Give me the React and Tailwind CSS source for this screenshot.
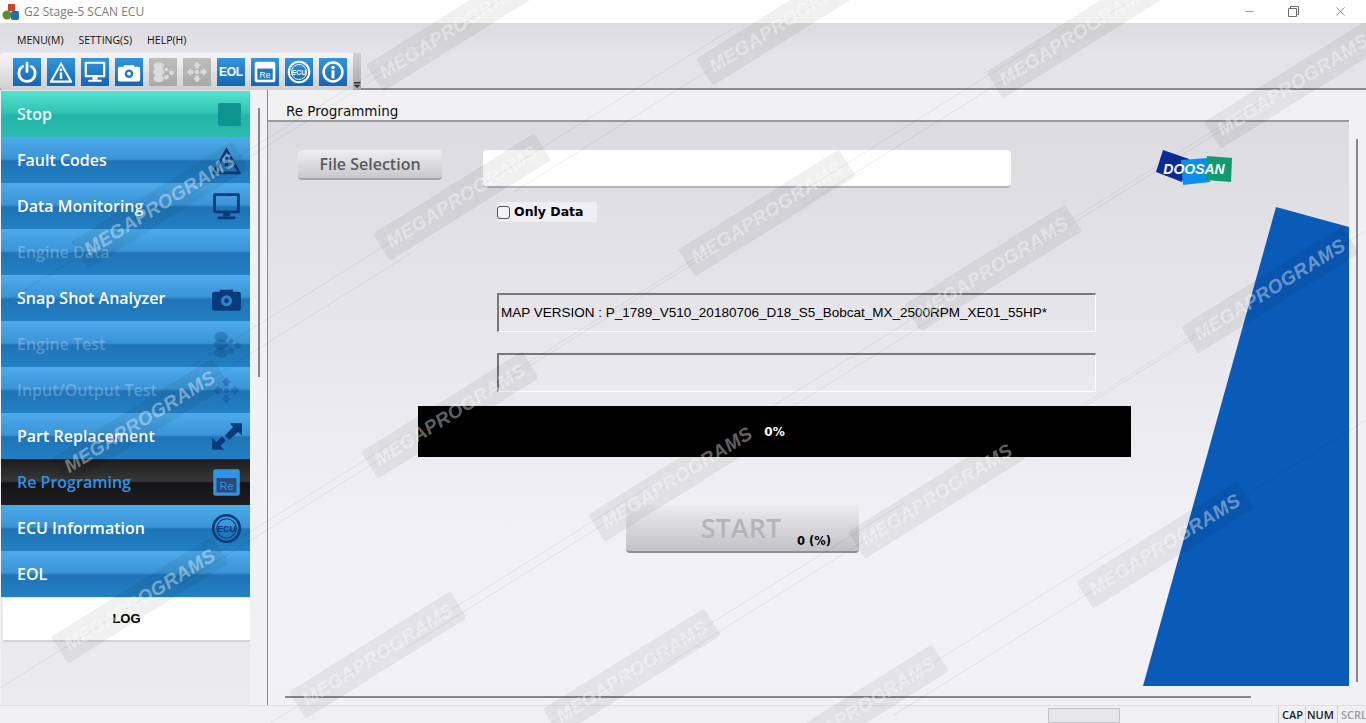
import React from 'react';
import { Minus, X } from 'lucide-react';

const SANS = "font-['Open_Sans','Noto_Sans',sans-serif]";

// one drawing per function, all on a 28 box, cut colour is whatever sits behind
const Glyph = ({ name, cut = '#1f78c4', className = 'w-7 h-7' }) => {
  const common = { viewBox: '0 0 28 28', className, fill: 'currentColor' };
  switch (name) {
    case 'power':
      return (
        <svg {...common} fill="none" stroke="currentColor" strokeWidth="3.2" strokeLinecap="round">
          <path d="M9 7.5a9.5 9.5 0 1 0 10 0" />
          <path d="M14 3.5v10" />
        </svg>
      );
    case 'alert':
      return (
        <svg {...common}>
          <path fillRule="evenodd" d="M14 2 27 25a1 1 0 0 1-1 1.5H2A1 1 0 0 1 1 25ZM14 6.5 4.5 24h19Z" />
          <circle cx="14" cy="11.5" r="1.7" />
          <rect x="12.6" y="14.5" width="2.8" height="7.5" />
        </svg>
      );
    case 'monitor':
      return (
        <svg {...common}>
          <path fillRule="evenodd" d="M3 2h22a1 1 0 0 1 1 1v16a1 1 0 0 1-1 1H3a1 1 0 0 1-1-1V3a1 1 0 0 1 1-1Zm1.5 2.5v13h19v-13Z" />
          <rect x="11" y="20" width="6" height="3" />
          <rect x="6" y="23" width="16" height="2.5" rx="1" />
        </svg>
      );
    case 'camera':
      return (
        <svg {...common}>
          <path d="M8 6h12v2h5a2 2 0 0 1 2 2v13a2 2 0 0 1-2 2H3a2 2 0 0 1-2-2V10a2 2 0 0 1 2-2h5Z" />
          <circle cx="14" cy="16" r="5" fill={cut} />
          <circle cx="14" cy="16" r="2.2" />
        </svg>
      );
    case 'engine':
      return (
        <svg {...common}>
          <ellipse cx="9" cy="7" rx="6" ry="4.5" />
          <ellipse cx="9" cy="14" rx="6.5" ry="4.5" />
          <ellipse cx="9" cy="21.5" rx="6" ry="4.5" />
          <circle cx="18" cy="11" r="2" />
          <circle cx="24" cy="15" r="2.8" />
          <circle cx="18" cy="20" r="2.8" />
        </svg>
      );
    case 'move':
      return (
        <svg {...common}>
          <circle cx="14" cy="14" r="2.5" />
          <path d="M14 2l4.5 5H16v3h-4V7H9.500ZM14 26l4.500-5H16v-3h-4v3H9.500ZM2 14l5-4.500V12h3v4H7v2.500ZM26 14l-5-4.500V12h-3v4h3v2.500Z" />
        </svg>
      );
    case 'swap':
      return (
        <svg {...common}>
          <path d="M17 2h11v11l-3.500-3-8 7-4-4 7.500-7.500Z" />
          <path d="M1 15v11h11l-3.500-3.500 5-5-3.500-3.500-5 5Z" />
        </svg>
      );
    case 're':
      return (
        <svg {...common}>
          <rect x="2" y="2" width="24" height="24" rx="2" />
          <rect x="5" y="10" width="18" height="13" fill={cut} />
          <text x="14" y="20.500" textAnchor="middle" fontSize="10" fontFamily="'Liberation Sans',sans-serif" fill="currentColor">Re</text>
        </svg>
      );
    case 'ecu':
      return (
        <svg {...common} fill="none">
          <circle cx="14" cy="14" r="12" stroke="currentColor" strokeWidth="2.400" />
          <circle cx="14" cy="14" r="8.800" stroke="currentColor" strokeWidth="1" />
          <text x="14" y="17" textAnchor="middle" fontSize="8" fontWeight="700" fontFamily="'Liberation Sans',sans-serif" fill="currentColor">ECU</text>
        </svg>
      );
    case 'info':
      return (
        <svg {...common}>
          <path fillRule="evenodd" d="M14 1.500a12.500 12.500 0 1 1 0 25 12.500 12.500 0 0 1 0-25Zm0 3a9.500 9.500 0 1 0 0 19 9.500 9.500 0 0 0 0-19Z" />
          <circle cx="14" cy="8.800" r="2" />
          <rect x="12.300" y="12" width="3.400" height="9.500" />
        </svg>
      );
    default:
      return null;
  }
};

const toolbarItems = [
  { name: 'power' },
  { name: 'alert' },
  { name: 'monitor' },
  { name: 'camera' },
  { name: 'engine', off: true },
  { name: 'move', off: true },
  { name: 'eol' },
  { name: 're' },
  { name: 'ecu' },
  { name: 'info' },
];

const sideItems = [
  { label: 'Stop', kind: 'stop' },
  { label: 'Fault Codes', icon: 'alert' },
  { label: 'Data Monitoring', icon: 'monitor' },
  { label: 'Engine Data', off: true },
  { label: 'Snap Shot Analyzer', icon: 'camera' },
  { label: 'Engine Test', icon: 'engine', off: true },
  { label: 'Input/Output Test', icon: 'move', off: true },
  { label: 'Part Replacement', icon: 'swap' },
  { label: 'Re Programing', icon: 're', kind: 'active' },
  { label: 'ECU Information', icon: 'ecu' },
  { label: 'EOL' },
];

const watermarks = [
  'left-[455px] top-[28px]',
  'left-[785px] top-[22px]',
  'left-[1075px] top-[35px]',
  'left-[1293px] top-[85px]',
  'left-[160px] top-[205px]',
  'left-[462px] top-[197px]',
  'left-[767px] top-[213px]',
  'left-[993px] top-[268px]',
  'left-[1270px] top-[290px]',
  'left-[140px] top-[422px]',
  'left-[450px] top-[415px]',
  'left-[677px] top-[478px]',
  'left-[937px] top-[495px]',
  'left-[1165px] top-[545px]',
  'left-[140px] top-[600px]',
  'left-[378px] top-[655px]',
  'left-[632px] top-[672px]',
  'left-[860px] top-[708px]',
];

const ToolbarButton = ({ name, off }) => {
  const tile = off
    ? 'bg-[linear-gradient(#bdbdbd,#a9a9a9)] text-[#dcdcdc]'
    : 'bg-[linear-gradient(#3295de,#1566b2)] text-white';
  return (
    <div className={`w-7 h-7 flex items-center justify-center ${tile}`}>
      {name === 'eol' ? (
        <span className="font-['Liberation_Sans',sans-serif] text-[12px] font-bold leading-none tracking-tight">EOL</span>
      ) : (
        <Glyph name={name} className="w-6 h-6" cut="#1f78c4" />
      )}
    </div>
  );
};

const SideItem = ({ label, icon, off, kind }) => {
  let tone = 'bg-[linear-gradient(#4dabec_0%,#3a93d6_48%,#1f74b6_52%,#2280c4_100%)] text-white';
  if (kind === 'stop') tone = 'bg-[linear-gradient(#52e3d0_0%,#30c2b2_48%,#22b5a8_52%,#29bcae_100%)] text-white/90';
  if (kind === 'active') tone = 'bg-[linear-gradient(#1c1c1e_0%,#383839_48%,#141416_52%,#1f1f21_100%)] text-[#2f93e6]';

  let iconTone = 'text-[#0b3a7c]';
  if (off) iconTone = 'text-[#0b3a7c]/30';
  if (kind === 'active') iconTone = 'text-[#2f93e6]';

  return (
    <div className={`h-[46px] flex items-center justify-between pl-4 pr-2 ${tone}`}>
      <span className={`${SANS} text-[16px] font-semibold ${off ? 'text-white/25' : ''}`}>{label}</span>
      {kind === 'stop' && <div className="w-[23px] h-[23px] mr-[1px] rounded-[2px] bg-[#0f958f]" />}
      {icon && <Glyph name={icon} cut={kind === 'active' ? '#2a4a78' : '#2a86ca'} className={`w-[31px] h-[31px] ${iconTone}`} />}
    </div>
  );
};

const Sidebar = () => (
  <div className="w-[268px] flex shrink-0 border-r border-[#8c8c8c] bg-[#f1f1f4]">
    <div className="w-[249px] ml-[1px] flex flex-col bg-[linear-gradient(#e2e2e6,#ebebee)]">
      <div className="flex flex-col gap-[0px] pt-[1px]">
        {sideItems.map((item) => (
          <SideItem key={item.label} {...item} />
        ))}
      </div>
      <div className="h-[44px] flex items-center justify-center bg-white border-b-2 border-[#d4d4d8] ml-[2px] mt-[1px] rounded-bl-[2px] font-['Liberation_Sans',sans-serif] text-[13px] font-bold text-black">
        LOG
      </div>
    </div>
    <div className="w-[2px] h-[269px] ml-[8px] mt-[18px] bg-[#87878a]" />
  </div>
);

const Reprogramming = () => (
  <div className="relative flex-1 min-h-0 bg-[linear-gradient(#dcdbe0_0%,#e6e6ea_35%,#f0f0f5_70%,#f1f1f6_100%)] overflow-hidden">
    {/* blue wedge from the backdrop */}
    <svg className="absolute left-0 top-0 w-[1081px] h-[564px]" viewBox="0 0 1081 564">
      <polygon points="1008,85 1081,105 1081,564 875,564" fill="#0a5ab8" />
    </svg>

    <div className="relative flex flex-col">
      <div className="flex items-start pt-[28px] pl-[30px]">
        <button className={`${SANS} w-[144px] h-[30px] rounded-[4px] bg-[linear-gradient(#eeeeF0,#c9c8cc)] border-b-2 border-[#a4a4a8] text-[16px] font-semibold text-[#5a5a5e]`}>
          File Selection
        </button>
        <div className="ml-[41px] w-[528px] h-[38px] rounded-[4px] bg-white border-b-2 border-[#b4b4b8]" />
        <svg className="ml-[145px] w-[76px] h-[36px]" viewBox="0 0 76 36">
          <polygon points="7,0 33,9 26,32 0,22" fill="#0a2a9a" />
          <polygon points="25,10 52,8 54,32 27,35" fill="#0a8fee" />
          <polygon points="51,6 76,8 75,32 50,30" fill="#109a6e" />
          <text x="38" y="24" textAnchor="middle" fontSize="14" fontWeight="700" fontStyle="italic" fontFamily="'Liberation Sans',sans-serif" fill="#ffffff">DOOSAN</text>
        </svg>
      </div>

      <label className="ml-[229px] mt-[14px] w-[100px] h-[20px] flex items-center bg-[#efeff3] font-['DejaVu_Sans',sans-serif] text-[12.500px] font-bold text-black">
        <span className="w-[13px] h-[13px] rounded-[3px] border border-[#555] bg-[#f4f4f4] mr-[4px]" />
        Only Data
      </label>

      <div className="ml-[229px] mt-[71px] w-[599px] h-[39px] flex items-center pl-[2px] border-t-2 border-l-2 border-[#77777a] border-b border-r border-b-white border-r-white font-['Liberation_Sans',sans-serif] text-[13.500px] text-black whitespace-nowrap">
        MAP VERSION : P_1789_V510_20180706_D18_S5_Bobcat_MX_2500RPM_XE01_55HP*
      </div>
      <div className="ml-[229px] mt-[21px] w-[599px] h-[39px] border-t-2 border-l-2 border-[#77777a] border-b border-r border-b-white border-r-white" />

      <div className="ml-[150px] mt-[14px] w-[713px] h-[51px] flex items-center justify-center bg-black font-['DejaVu_Sans',sans-serif] text-[12px] font-bold text-white">
        0%
      </div>

      <div className="relative ml-[358px] mt-[48px] w-[233px] h-[48px] rounded-[4px] bg-[linear-gradient(#ececef,#c2c1c5)] border-b-2 border-[#8f8f93] flex items-center justify-center pr-[3px]">
        <span className={`${SANS} text-[27px] font-semibold text-[#b4b4b8]`}>START</span>
        <span className="absolute left-[171px] top-[28px] font-['DejaVu_Sans',sans-serif] text-[11.500px] font-bold text-black">0 (%)</span>
      </div>
    </div>
  </div>
);

export default function App() {
  return (
    <div className="relative w-[1366px] h-[723px] overflow-hidden flex flex-col bg-[#f1f1f4]">
      {/* title bar */}
      <div className="h-[23px] shrink-0 flex items-center bg-white">
        <svg className="w-[18px] h-[18px] ml-[2px]" viewBox="0 0 18 18">
          <rect x="6" y="1" width="7" height="7" fill="#c8442c" />
          <circle cx="5" cy="12" r="4.500" fill="#5a8a3a" />
          <rect x="9" y="8" width="8" height="9" rx="2" fill="#1c6fb8" />
        </svg>
        <span className={`${SANS} ml-[4px] text-[12px] text-[#7c7c7c]`}>G2 Stage-5 SCAN ECU</span>
        <div className="ml-auto flex items-center text-[#6e6e6e]">
          <Minus size={13} strokeWidth={1.2} />
          <svg className="w-[11px] h-[11px] ml-[32px]" viewBox="0 0 11 11" fill="none" stroke="currentColor">
            <path d="M0.500 2.500h8v8h-8zM2.500 2.500v-2h8v8h-2" />
          </svg>
          <X size={15} strokeWidth={1.2} className="ml-[34px] mr-[18px]" />
        </div>
      </div>

      {/* menu bar */}
      <div className={`${SANS} h-[30px] shrink-0 flex items-center gap-[15px] pl-[17px] pt-[6px] bg-[linear-gradient(#dcdbdf,#e4e3e7)] text-[10.500px] text-[#111]`}>
        <span>MENU(M)</span>
        <span>SETTING(S)</span>
        <span>HELP(H)</span>
      </div>

      {/* tool bar */}
      <div className="h-[37px] shrink-0 flex bg-[#e4e3e7] border-b-2 border-[#8c8c8c]">
        <div className="relative w-[361px] h-[37px] flex items-center gap-[6px] pl-[13px] rounded-[3px] bg-[linear-gradient(#f6f6f7,#cfcfd2)]">
          {toolbarItems.map((item) => (
            <ToolbarButton key={item.name} {...item} />
          ))}
          <div className="absolute right-0 top-0 w-[8px] h-full flex items-end justify-center pb-[2px] bg-[linear-gradient(#d0d0d2,#a9a9ac)]">
            <span className="w-[7px] h-[6px] bg-[#333] [clip-path:polygon(0_0,100%_0,100%_25%,0_25%,0_45%,100%_45%,50%_100%,0_45%)]" />
          </div>
        </div>
      </div>

      {/* body */}
      <div className="flex flex-1 min-h-0">
        <Sidebar />
        <div className="flex-1 flex flex-col min-w-0">
          <div className="flex flex-1 min-h-0">
            <div className="flex-1 flex flex-col min-w-0">
              <div className="h-[32px] shrink-0 flex items-end pl-[18px] bg-[#f1f1f4] border-b-2 border-[#9a9a9c] font-['DejaVu_Sans',sans-serif] text-[13.500px] text-[#111]">
                <span className="leading-[17px]">Re Programming</span>
              </div>
              <Reprogramming />
            </div>
            <div className="w-[17px] shrink-0 bg-[#f1f1f4] flex justify-center">
              <div className="w-[2px] mt-[49px] mb-[6px] mr-[1px] bg-[#87878a]" />
            </div>
          </div>
          <div className="h-[17px] shrink-0 flex items-center pl-[17px] bg-[#f1f1f4]">
            <div className="w-[966px] h-[2px] bg-[#87878a]" />
          </div>
        </div>
      </div>

      {/* status bar */}
      <div className={`${SANS} h-[18px] shrink-0 flex items-end bg-[#f0f0f3] border-t border-[#dedee2] text-[11px] font-semibold`}>
        <div className="ml-[1048px] w-[72px] h-[15px] bg-[#e6e6e9] border border-[#c2c2c6]" />
        <div className="ml-[158px] h-[17px] pl-[3px] w-[27px] border-l border-[#cfcfd3] text-[#1d1d28] leading-[17px]">CAP</div>
        <div className="h-[17px] pl-[1px] w-[32px] border-l border-[#cfcfd3] text-[#1d1d28] leading-[17px]">NUM</div>
        <div className="h-[17px] pl-[3px] flex-1 border-l border-[#cfcfd3] text-[#9a9a9e] leading-[17px] whitespace-nowrap overflow-hidden">SCRL</div>
      </div>

      {/* watermark sits over everything */}
      <div className="absolute inset-0 pointer-events-none overflow-hidden">
        {watermarks.map((pos) => (
          <div key={pos} className={`absolute ${pos} w-0 h-0 -rotate-[32deg]`}>
            <div className="absolute left-[-320px] top-0 w-[640px] h-[1px] bg-black/[0.06]" />
            <div className="absolute left-[-95px] top-[-16px] w-[190px] h-[32px] rounded-[3px] bg-black/[0.06] flex items-center justify-center font-['Liberation_Sans',sans-serif] text-[19px] font-bold italic tracking-wide text-white/40 whitespace-nowrap">
              MEGAPROGRAMS
            </div>
          </div>
        ))}
      </div>
    </div>
  );
}
